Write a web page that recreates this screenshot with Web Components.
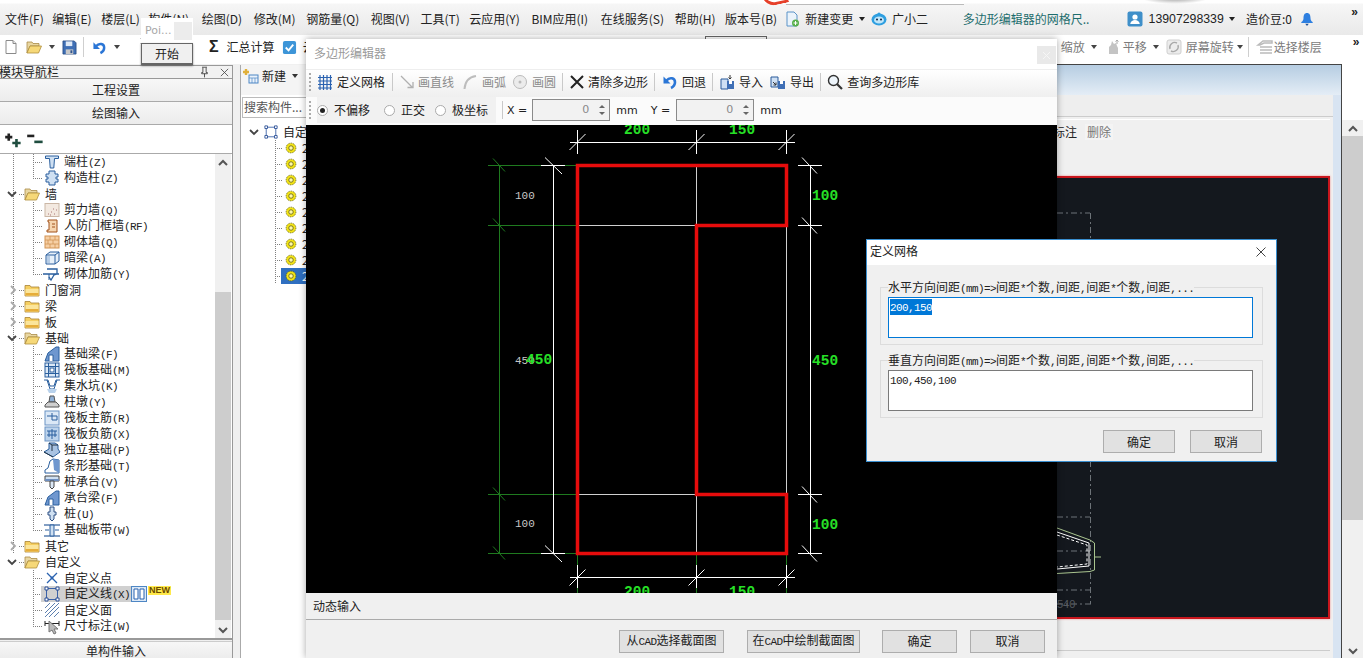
<!DOCTYPE html>
<html lang="zh">
<head>
<meta charset="utf-8">
<title>多边形编辑器</title>
<style>
  html, body { margin: 0; padding: 0; background: #f0f0f0; overflow: hidden; }
  body { font: 12px/16px "Noto Sans CJK SC", "Liberation Sans", sans-serif; color: #222; }
</style>
</head>
<body>
<gl-app>
  <gl-menubar></gl-menubar>
  <gl-toolbar></gl-toolbar>
  <gl-work></gl-work>
  <gl-poly-editor></gl-poly-editor>
  <gl-grid-dialog></gl-grid-dialog>
  <gl-start-popup></gl-start-popup>
</gl-app>

<script>
(function () {
  'use strict';

  var BLUE = '#2a5f9e', PALE = '#cfe0f2';

  // 16x16 icon shapes, all hand drawn from the reference
  var ICONS = {
    page: '<path d="M3 1.5h7l3 3v10H3z" fill="#fff" stroke="#8a8a8a"/><path d="M10 1.5v3h3" fill="#e8e8e8" stroke="#8a8a8a"/>',
    folderOpen: '<path d="M1 3h5l1 1.5h6V7H4L1 14z" fill="#e9d7a2" stroke="#a98c46" stroke-width=".8"/><path d="M1 14l3-7h11.5L12.5 14z" fill="#f6d878" stroke="#b08f3e" stroke-width=".8"/>',
    folder: '<path d="M1 3.5h5l1 1.5h8v9H1z" fill="#f5cf62" stroke="#a98435" stroke-width=".8"/><path d="M1.5 7h13v6.5h-13z" fill="#fbe59b"/><path d="M1.5 11h13v2.5h-13z" fill="#e6ad3a"/>',
    floppy: '<path d="M1 1h12l2 2v12H1z" fill="#3f6fb5" stroke="#24477f" stroke-width=".8"/><path d="M4 1.5h7v5H4z" fill="#dfe9f6"/><path d="M4 10h8v5H4z" fill="#c9c9c9"/><path d="M9 11h2v3H9z" fill="#33568f"/>',
    undo: '<path d="M4.5 6.5c3-3.6 8.5-2.8 8.5 1.8 0 2.7-1.8 4.6-4 5.7" stroke="#2b76d6" stroke-width="2.6" fill="none"/><path d="M1.5 2.5v7h7z" fill="#2b76d6"/>',
    check: '<rect x="1" y="1" width="14" height="14" rx="2" fill="#3d95d8"/><path d="M4 8l3 3 5-6" stroke="#fff" stroke-width="2" fill="none"/>',
    docAdd: '<path d="M3 1h7l3 3v11H3z" fill="#eaf3fb" stroke="#5b93c8"/><circle cx="11.5" cy="12" r="3.5" fill="#58b04a"/><path d="M9.5 12h4M11.5 10v4" stroke="#fff"/>',
    robot: '<ellipse cx="8" cy="8.5" rx="7.5" ry="6" fill="#2f9fe0"/><circle cx="8" cy="3" r="1.6" fill="#2f9fe0"/><ellipse cx="8" cy="9" rx="5" ry="3.6" fill="#bfe6fa"/><circle cx="6" cy="8.5" r="1" fill="#124"/><circle cx="10" cy="8.5" r="1" fill="#124"/>',
    user: '<rect x=".5" y=".5" width="15" height="15" rx="2" fill="#3f8fc9"/><circle cx="8" cy="6" r="2.6" fill="#fff"/><path d="M3.2 13c.6-3 2.6-4 4.8-4s4.2 1 4.8 4z" fill="#fff"/>',
    bell: '<path d="M8 1c3 0 4 2.500 4 6 0 2 1 3.500 2.500 4.500v1h-13v-1C3 10.500 4 9 4 7c0-3.500 1-6 4-6z" fill="#2e7fe0"/><path d="M6 13.500h4L8 16z" fill="#1d4f96"/>',
    pan: '<path d="M3 15V8l2-2 1-4 2 3 2-1 1 3 1 2v6z" fill="#c4c4c4"/><path d="M11 1v4M9.500 2.500L11 1l1.500 1.500" stroke="#aaa" fill="none"/>',
    rotate: '<rect x="1" y="1" width="14" height="14" rx="2" fill="#ececec" stroke="#cfcfcf"/><path d="M4 10a5 5 0 0 1 7-6M12 6a5 5 0 0 1-7 6" stroke="#a9a9a9" stroke-width="1.400" fill="none"/>',
    floors: '<path d="M1 6l5-4h9v2H7L3 6zM3 8h12M3 11h12M3 14h12" stroke="#bbb" stroke-width="1.500" fill="none"/>',
    pin: '<path d="M5 1.500h6M6 2v6H4.500v1.500h7V8H10V2M8 9.500V14" stroke="#333" fill="none"/>',
    close: '<path d="M3.500 3.500l9 9M12.500 3.500l-9 9" stroke="#444" fill="none"/>',
    expand: '<path d="M1 6h6M4 3v6" stroke="#222" stroke-width="2.200"/><path d="M7 11h7M10.500 7.500v7" stroke="#1f4d3f" stroke-width="2.200"/>',
    collapse: '<path d="M1 5h6" stroke="#222" stroke-width="2.200"/><path d="M7 10h7" stroke="#1f4d3f" stroke-width="2.200"/>',
    newItem: '<path d="M3 1v6M0 4h6" stroke="#e0b03a" stroke-width="2.400"/><rect x="6" y="7" width="9" height="8" fill="#eaf2fb" stroke="#4d86c4"/><path d="M6 10h9M9 10v5M12 10v5" stroke="#4d86c4" stroke-width=".7"/>',
    gear: '<circle cx="8" cy="8" r="6.500" fill="#f4e416" stroke="#55550e" stroke-dasharray="1.500 1"/><circle cx="8" cy="8" r="3" fill="#fff9a8" stroke="#55550e"/>',
    shape: '<rect x="2.500" y="2.500" width="11" height="11" fill="none" stroke="#3b62a8"/><path d="M1 1h3v3H1zM12 1h3v3h-3zM1 12h3v3H1zM12 12h3v3h-3z" fill="#fff" stroke="#2a4f96"/>',
    grid: '<path d="M1 3.500h14M1 7h14M1 10.500h14M1 14h14M3 1v15M6.500 1v15M10 1v15M13.500 1v15" stroke="#2a62b0" stroke-width="1.200" fill="none"/>',
    drawLine: '<path d="M2 2l11 11M8.500 13.500H14V8" stroke="#b0b0b0" stroke-width="1.300" fill="none"/>',
    arc: '<path d="M2.500 15C3 8 7 3 14 2" stroke="#bdbdbd" stroke-width="2" fill="none"/>',
    circle: '<circle cx="8" cy="8" r="6.500" fill="#ececec" stroke="#bbb"/><circle cx="8" cy="8" r="1.500" fill="#bbb"/>',
    bigX: '<path d="M2 2l12 12M14 2L2 14" stroke="#222" stroke-width="2" fill="none"/>',
    importFile: '<path d="M2 5h7v10H2z" fill="#cfe0f4" stroke="#2a5a9a"/><path d="M8 7h7v8H8z" fill="#3f6fb5"/><path d="M10 7h3v3h-3z" fill="#fff"/><path d="M11 1v4M9.500 3.500L11 5l1.500-1.500" stroke="#333" fill="none"/>',
    exportFile: '<path d="M1 3h7v10H1z" fill="#cfe0f4" stroke="#2a5a9a"/><path d="M8 7h7v8H8z" fill="#3f6fb5"/><path d="M10 7h3v3h-3z" fill="#fff"/><path d="M3 8l3 3M6 8.500V11H3.500" stroke="#333" fill="none"/>',
    search: '<circle cx="6.500" cy="6.500" r="5" fill="#eef5fb" stroke="#333" stroke-width="1.400"/><path d="M10 10l5 5" stroke="#333" stroke-width="2.200"/>',
    column: '<path d="M1.500 2h13v2.500h-4L9.800 14H6.200L5.500 4.500h-4z" fill="' + PALE + '" stroke="' + BLUE + '"/>',
    tie: '<path d="M5 1h6v3h3v3h-2v2h2v3h-3v3H5v-3H2V9h2V7H2V4h3z" fill="' + PALE + '" stroke="' + BLUE + '"/>',
    shear: '<rect x="1" y="1.500" width="14" height="13" fill="#f3e9e0" stroke="#cbb7a6"/><path d="M4 12h1M7 10h1M10 12h1M12 8h1M9 7h1M6 13h1" stroke="#a77"/>',
    frameWall: '<path d="M4 2h9v12H3v-2h2V4H4z" fill="#f6d6b0" stroke="#a2521d"/><path d="M8 6h3M8 9h3" stroke="#a2521d"/>',
    brick: '<rect x="1" y="2" width="14" height="12" fill="#f6cfa4" stroke="#d29455"/><path d="M1 6h14M1 10h14M6 2v4M11 2v4M4 6v4M9 6v4M6 10v4M11 10v4" stroke="#d29455" stroke-width=".8"/>',
    hidBeam: '<path d="M2 5l4-3h9v9l-4 3H2z" fill="#e7f0f9" stroke="' + BLUE + '"/><path d="M2 5h9v9M11 5l4-3" fill="none" stroke="' + BLUE + '"/><path d="M3 6h3v7H3z" fill="#b7cde6"/>',
    wallRebar: '<path d="M-1 8h16M3 3h10v5l-3 1-3 5-2-3" fill="none" stroke="' + BLUE + '" stroke-width="1.300"/><path d="M5 14V8" stroke="' + BLUE + '"/>',
    slope: '<path d="M1 15l3-8 8-6h3v14z" fill="#6f97cf" stroke="' + BLUE + '"/><path d="M5 15V9h4v6" fill="#fff" stroke="' + BLUE + '"/>',
    raft: '<rect x="1" y="1" width="14" height="14" fill="#dbe8f6" stroke="' + BLUE + '"/><path d="M1 4.500h14M1 11.500h14M4.500 1v14M11.500 1v14" stroke="' + BLUE + '"/><rect x="6" y="6" width="4" height="4" fill="#fff" stroke="' + BLUE + '"/>',
    sump: '<path d="M0 2h4l2 6h4l2-6h4M3 2l3 9h4l3-9" fill="none" stroke="' + BLUE + '"/><path d="M3 11l2 4h6l2-4z" fill="#b9d2ec"/>',
    pier: '<path d="M6 2h4l1 6H5z" fill="#8fb0d6" stroke="#555"/><path d="M1 11l3-3h8l3 3v2H1z" fill="#cfcfcf" stroke="#555"/>',
    mainBar: '<rect x="1" y="1" width="14" height="14" fill="#dbe8f6" stroke="#6b93c4"/><path d="M3 6h10v4H8V3" fill="none" stroke="' + BLUE + '"/>',
    negBar: '<rect x="1" y="1" width="14" height="14" fill="#bcd3ec" stroke="#6b93c4"/><path d="M3 5h10M3 9h10M8 3v10M5 5v6M11 5v6" fill="none" stroke="' + BLUE + '"/>',
    isoFound: '<path d="M0 10l5-3V1h6l3 2v4l2 3-7 5z" fill="#a9c3e2" stroke="' + BLUE + '"/><path d="M5 1l3 2v6M8 3h6M0 10l9 5" fill="none" stroke="#234"/>',
    strip: '<path d="M1 15v-3l3-2 2-7 3-2 6 1v13z" fill="#fff" stroke="' + BLUE + '"/><path d="M9 1l1 11 5 3V2z" fill="#6f97cf"/>',
    capPile: '<path d="M1 2h14v5H1z" fill="' + PALE + '" stroke="#444"/><path d="M1 5h14v2H1z" fill="#6f8fbf"/><path d="M6 7h4v6l-2 2-2-2z" fill="#dbe8f6" stroke="#444"/>',
    pile: '<path d="M6 1h4v5h2v3h-2v4l-2 2-2-2V9H4V6h2z" fill="' + PALE + '" stroke="#2c4f83"/>',
    slabBand: '<path d="M0 3h16M0 14h16" stroke="#5a7fb0" stroke-width="1.600"/><path d="M6 3h4v11H6z" fill="' + PALE + '" stroke="' + BLUE + '"/><path d="M1 8h4M11 8h4" stroke="' + BLUE + '"/>',
    point: '<path d="M3 3l10 10M13 3L3 13" stroke="#2a62b0" stroke-width="1.300"/><circle cx="8" cy="8" r="1.400" fill="#2a62b0"/>',
    hatch: '<path d="M1 6l5-5M1 11L11 1M1 15L15 1M5 15L15 5M10 15l5-5" stroke="#5c7fae"/>',
    dimMark: '<path d="M1 3v5M15 3v5M1 5.500h14" stroke="#222"/>',
    cols: '<rect x=".5" y=".5" width="15" height="15" fill="#dbe8f6" stroke="#4d86c4"/><path d="M3 3h4v10H3zM9 3h4v10H9z" fill="#fff" stroke="#2a62b0"/>'
  };

  // half width Latin beside 12px CJK, the way the old dialog font sets it
  function mono(s) {
    return s.replace(/[^\u4e00-\u9fff]+/g, function (m) {
      return '<span class="k">' + m.replace(/&/g, '&amp;').replace(/</g, '&lt;').replace(/>/g, '&gt;') + '</span>';
    });
  }
  var MONO_CSS = '.k{font:11px/16px "Liberation Mono",monospace;letter-spacing:-.6px;}';

  class GlIcon extends HTMLElement {
    connectedCallback() {
      var size = this.getAttribute('size') || 16;
      var root = this.attachShadow({ mode: 'open' });
      root.innerHTML = '<style>:host{display:inline-flex;flex:none;}svg{display:block;overflow:visible;}</style>' +
        '<svg width="' + size + '" height="' + size + '" viewBox="0 0 16 16">' + (ICONS[this.getAttribute('name')] || '') + '</svg>';
    }
  }

  class GlApp extends HTMLElement {
    connectedCallback() {
      this.attachShadow({ mode: 'open' }).innerHTML =
        '<style>:host{display:flex;flex-direction:column;position:relative;width:1363px;height:658px;overflow:hidden;background:#f0f0f0;}</style><slot></slot>';
    }
  }

  class GlMenubar extends HTMLElement {
    connectedCallback() {
      var left = ['文件(F)', '编辑(E)', '楼层(L)', '构件(N)', '绘图(D)', '修改(M)', '钢筋量(Q)', '视图(V)', '工具(T)', '云应用(Y)', 'BIM应用(I)', '在线服务(S)', '帮助(H)', '版本号(B)'];
      var nudge = [0, -2, -1, -2, 2, 1, 0, 1, 0, -1, 1, 2, 0, -1]; // the reference font sets these a little unevenly
      this.attachShadow({ mode: 'open' }).innerHTML =
        '<style>' +
        ':host{display:flex;align-items:center;flex:none;height:35px;padding:3px 0 0 5px;box-sizing:border-box;position:relative;gap:10.6px;' +
        'background:linear-gradient(#fff 0,#fff 3px,#f6f6f6 4px,#e9e9e9 100%);white-space:nowrap;line-height:16px;}' +
        '.arrow{width:0;height:0;border:3px solid transparent;border-top:4px solid #222;border-bottom:0;}' +
        '.scrap{position:absolute;left:786px;top:0;width:178px;height:5px;background:#fff;border-bottom:1px solid #bbb;box-sizing:border-box;}' +
        '.red{position:absolute;left:763px;top:-8px;width:22px;height:10px;border:3px solid #e6402a;border-top:0;border-right:0;border-radius:0 0 0 12px;transform:rotate(-12deg);}' +
        '.smudge{position:absolute;left:1140px;top:-10px;width:70px;height:14px;background:radial-gradient(closest-side,rgba(0,0,0,.45),transparent);}' +
        '.teal{color:#1d6d6d;}' +
        '.more{font:bold 12px/12px "Liberation Sans",sans-serif;color:#222;margin-top:-14px;}' +
        '</style>' +
        left.map(function (t, i) { return '<span style="margin-left:' + nudge[i] + 'px">' + t + '</span>'; }).join('') +
        '<gl-icon name="docAdd" style="margin-left:-4px"></gl-icon><span style="margin-left:-5px">新建变更</span><span class="arrow" style="margin-left:-5px"></span>' +
        '<gl-icon name="robot" style="margin-left:-4px"></gl-icon><span style="margin-left:-6px">广小二</span>' +
        '<span class="teal" style="margin-left:24px">多边形编辑器的网格尺..</span>' +
        '<gl-icon name="user" style="margin-left:27px"></gl-icon><span style="margin-left:-5px;font-family:\'Liberation Sans\',sans-serif;font-size:12.3px;">13907298339</span><span class="arrow" style="margin-left:-5px"></span>' +
        '<span style="margin-left:0">造价豆:0</span><gl-icon name="bell" size="14" style="margin-left:-3px"></gl-icon>' +
        '<span class="more" style="margin-left:27px">»</span>' +
        '<span class="scrap"></span><span class="red"></span><span class="smudge"></span>';
    }
  }

  class GlToolbar extends HTMLElement {
    connectedCallback() {
      this.attachShadow({ mode: 'open' }).innerHTML =
        '<style>' +
        ':host{display:flex;align-items:center;flex:none;height:29px;box-sizing:border-box;padding-bottom:5px;background:#fff;white-space:nowrap;line-height:16px;padding-left:3px;}' +
        '.arrow{width:0;height:0;border:3px solid transparent;border-top:4px solid #444;border-bottom:0;margin:0 6px;}' +
        '.sep{width:1px;height:20px;background:#cfcfcf;}' +
        '.sigma{font:bold 16px/16px "Liberation Sans",sans-serif;}' +
        '.tab{align-self:flex-start;margin-top:1px;width:62px;height:28px;box-sizing:border-box;border:1px solid #666;border-bottom:0;}' +
        '.dim{color:#7b7b7b;}' +
        '.more{font:bold 12px/12px "Liberation Sans",sans-serif;color:#222;margin-left:31px;margin-top:-10px;}' +
        '</style>' +
        '<gl-icon name="page"></gl-icon><gl-icon name="folderOpen" style="margin-left:7px"></gl-icon><span class="arrow" style="margin:0 0 0 7px"></span>' +
        '<gl-icon name="floppy" size="15" style="margin-left:7px"></gl-icon><span class="sep" style="margin:0 8px 0 6px"></span>' +
        '<gl-icon name="undo" size="15"></gl-icon><span class="arrow" style="margin:0 0 0 7px"></span>' +
        '<svg width="5" height="8" style="margin:-12px 3px 0 20px;flex:none"><path d="M1 1l3 3-3 3" fill="none" stroke="#222" stroke-width="1.400"/></svg>' +
        '<span class="sigma" style="margin-left:61px">Σ</span><span style="margin-left:8px">汇总计算</span>' +
        '<gl-icon name="check" size="15" style="margin-left:7px"></gl-icon><span style="margin-left:6px">云</span>' +
        '<span class="tab" style="margin-left:390px"></span>' +
        '<span class="dim" style="margin-left:294px">缩放</span><span class="arrow" style="margin:0 0 0 6px"></span>' +
        '<gl-icon name="pan" style="margin-left:9px"></gl-icon><span class="dim" style="margin-left:1px">平移</span><span class="arrow" style="margin:0 0 0 6px"></span>' +
        '<gl-icon name="rotate" style="margin-left:7px"></gl-icon><span class="dim" style="margin-left:4px">屏幕旋转</span><span class="arrow" style="margin:0 0 0 3px"></span>' +
        '<span class="sep" style="margin:0 8px 0 5px"></span><gl-icon name="floors"></gl-icon><span class="dim" style="margin-left:1px">选择楼层</span>' +
        '<span class="more">»</span>';
    }
  }

  class GlScroll extends HTMLElement {
    connectedCallback() {
      var before = this.getAttribute('before') || 0;
      var thumb = this.getAttribute('thumb') || 100;
      this.attachShadow({ mode: 'open' }).innerHTML =
        '<style>' +
        ':host{display:flex;flex-direction:column;flex:none;width:16px;background:#f0f0f0;}' +
        '.btn{display:flex;align-items:center;justify-content:center;height:16px;flex:none;}' +
        '.thumb{background:#cdcdcd;flex:none;}.fill{flex:1;display:flex;flex-direction:column;}' +
        '</style>' +
        '<div class="btn"><svg width="10" height="7"><path d="M1 6l4-4 4 4" fill="none" stroke="#555" stroke-width="2"/></svg></div>' +
        '<div class="fill"><div style="height:' + before + 'px"></div><div class="thumb" style="height:' + thumb + 'px"></div></div>' +
        '<div class="btn bottom"><svg width="10" height="7"><path d="M1 1l4 4 4-4" fill="none" stroke="#555" stroke-width="2"/></svg></div>';
    }
  }

  var DOT = '#808080';
  function vDots(x, h) { return 'repeating-linear-gradient(' + DOT + ' 0 1px,transparent 1px 2px) ' + x + 'px 0/1px ' + h + ' no-repeat'; }
  function hDots(x, w) { return 'repeating-linear-gradient(90deg,' + DOT + ' 0 1px,transparent 1px 2px) ' + x + 'px 8px/' + w + 'px 1px no-repeat'; }

  // one row of a tree: folder rows carry a chevron, leaf rows hang off the dotted branch
  class GlTreeRow extends HTMLElement {
    connectedCallback() {
      var folder = this.hasAttribute('folder'), open = this.hasAttribute('open');
      var last = this.hasAttribute('last'), loose = this.hasAttribute('loose');
      var bg = [];
      if (!loose) bg.push(vDots(13, '100%'));
      if (!folder) { bg.push(vDots(33, last ? '9px' : '100%')); bg.push(hDots(33, 10)); }
      else bg.push(hDots(19, 5));
      var chev = !folder ? '' : open
        ? '<svg class="chev" width="10" height="7" style="margin-left:7px"><path d="M1 1l4 4 4-4" fill="none" stroke="#444" stroke-width="1.800"/></svg>'
        : '<svg class="chev" width="7" height="10" style="margin-left:10px"><path d="M1 1l4 4-4 4" fill="none" stroke="#aaa" stroke-width="1.800"/></svg>';
      var icon = folder ? (open ? 'folderOpen' : 'folder') : this.getAttribute('icon');
      this.attachShadow({ mode: 'open' }).innerHTML =
        '<style>' + MONO_CSS +
        ':host{display:flex;align-items:center;height:16px;white-space:nowrap;background:' + bg.join(',') + ';}' +
        '.body{display:flex;align-items:center;gap:' + (folder ? 5 : 4) + 'px;height:16px;padding-right:1px;}' +
        '.leaf{margin-left:41px;padding-left:3px;}' +
        '.sel{background:#d0d0d0;}' +
        '.chev{flex:none;}' +
        '</style>' + chev +
        '<div class="body ' + (folder ? '' : 'leaf ') + (this.hasAttribute('sel') ? 'sel' : '') + '"' +
        (folder ? ' style="margin-left:7px"' : '') + '>' +
        '<gl-icon name="' + icon + '"></gl-icon><span>' + mono(this.getAttribute('label')) + '</span></div><slot></slot>';
    }
  }

  var NAV_TREE = [
    ['column', '端柱(Z)'], ['tie', '构造柱(Z)', 'last'],
    ['open', '墙'],
    ['shear', '剪力墙(Q)'], ['frameWall', '人防门框墙(RF)'], ['brick', '砌体墙(Q)'], ['hidBeam', '暗梁(A)'], ['wallRebar', '砌体加筋(Y)', 'last'],
    ['closed', '门窗洞'], ['closed', '梁'], ['closed', '板'],
    ['open', '基础'],
    ['slope', '基础梁(F)'], ['raft', '筏板基础(M)'], ['sump', '集水坑(K)'], ['pier', '柱墩(Y)'], ['mainBar', '筏板主筋(R)'], ['negBar', '筏板负筋(X)'],
    ['isoFound', '独立基础(P)'], ['strip', '条形基础(T)'], ['capPile', '桩承台(V)'], ['slope', '承台梁(F)'], ['pile', '桩(U)'], ['slabBand', '基础板带(W)', 'last'],
    ['closed', '其它'],
    ['open', '自定义', 'loose'],
    ['point', '自定义点', 'loose'], ['shape', '自定义线(X)', 'loose sel'], ['hatch', '自定义面', 'loose'], ['dimMark', '尺寸标注(W)', 'loose last']
  ];

  class GlNav extends HTMLElement {
    connectedCallback() {
      var rows = NAV_TREE.map(function (r) {
        var flags = r[2] || '';
        var extra = flags.indexOf('sel') >= 0
          ? '<gl-icon name="cols"></gl-icon><span class="new">NEW</span>' : '';
        if (r[0] === 'open') return '<gl-tree-row folder open label="' + r[1] + '" ' + flags + '></gl-tree-row>';
        if (r[0] === 'closed') return '<gl-tree-row folder label="' + r[1] + '" ' + flags + '></gl-tree-row>';
        return '<gl-tree-row icon="' + r[0] + '" label="' + r[1] + '" ' + flags + '>' + extra + '</gl-tree-row>';
      }).join('');
      this.attachShadow({ mode: 'open' }).innerHTML =
        '<style>' +
        ':host{display:flex;flex-direction:column;flex:none;width:233px;height:594px;margin-top:1px;box-sizing:border-box;border-right:1px solid #999;}' +
        '.head{display:flex;align-items:center;height:12px;flex:none;border:1px solid #999;border-left:0;border-right:0;background:#f2f2f2;line-height:12px;box-sizing:content-box;}' +
        '.head span{flex:1;margin-left:-1px;}' +
        '.stack{display:flex;align-items:center;justify-content:center;height:23px;flex:none;box-sizing:border-box;border-bottom:1px solid #aaa;background:linear-gradient(#f7f7f7,#ececec);}' +
        '.tools{display:flex;align-items:center;gap:3px;height:29px;flex:none;padding-left:4px;background:#fff;border-bottom:1px solid #aaa;box-sizing:border-box;}' +
        '.tree{display:flex;flex:none;height:484px;background:#fff;border-bottom:2px solid #999;overflow:hidden;position:relative;}' +
        '.rows{flex:1;overflow:hidden;}' +
        '.cursor{position:absolute;left:48px;top:466px;}' +
        '.foot{display:flex;align-items:center;justify-content:center;flex:1;background:linear-gradient(#f7f7f7,#ececec);margin-top:1px;border-top:1px solid #ccc;}' +
        '.new{font:bold 9px/9px "Liberation Sans",sans-serif;color:#6b4a00;background:#ffe94a;padding:0 1px;margin-left:1px;transform:translateY(-4px);}' +
        'gl-scroll{width:16px;margin-right:1px;}' +
        '</style>' +
        '<div class="head"><span>模块导航栏</span><gl-icon name="pin" size="13"></gl-icon><gl-icon name="close" size="13" style="margin:0 1px 0 7px"></gl-icon></div>' +
        '<div class="stack">工程设置</div><div class="stack">绘图输入</div>' +
        '<div class="tools"><gl-icon name="expand" size="19"></gl-icon><gl-icon name="collapse" size="19"></gl-icon></div>' +
        '<div class="tree"><div class="rows">' + rows + '</div><gl-scroll before="122" thumb="328"></gl-scroll>' +
        '<svg class="cursor" width="13" height="15"><path d="M1 1v11l3-2 2 4 2-1-2-4h4z" fill="#bbb" stroke="#777"/></svg></div>' +
        '<div class="foot">单构件输入</div>';
    }
  }

  class GlList extends HTMLElement {
    connectedCallback() {
      var rows = '';
      for (var i = 0; i < 9; i++) {
        rows += '<div class="row' + (i === 8 ? ' sel' : '') + '"><gl-icon name="gear" size="12"></gl-icon><span>2</span></div>';
      }
      this.attachShadow({ mode: 'open' }).innerHTML =
        '<style>' +
        ':host{display:flex;flex-direction:column;flex:none;width:130px;margin:1px 0 0 7px;background:#fff;border-left:1px solid #aaa;height:594px;box-sizing:border-box;}' +
        '.bar{display:flex;align-items:center;height:30px;box-sizing:border-box;padding:0 0 8px 2px;gap:3px;background:#f4f4f4;flex:none;}' +
        '.find{height:21px;margin:2px 0 0 1px;border:1px solid #bbb;box-sizing:border-box;padding-left:1px;line-height:18px;color:#555;background:#fff;white-space:nowrap;flex:none;}' +
        '.top{display:flex;align-items:center;height:16px;margin-top:6px;padding-left:8px;gap:5px;white-space:nowrap;flex:none;}' +
        '.rows{background:' + vDots(34, '100%') + ';}' +
        '.row{display:flex;align-items:center;height:16px;padding-left:44px;gap:5px;background:' + hDots(34, 8) + ';}' +
        '.sel{background:linear-gradient(#2f6fc0,#2f6fc0) 40px 0/90px 100% no-repeat,' + hDots(34, 6) + ';color:#fff;}' +
        '.arrow{width:0;height:0;border:3px solid transparent;border-top:4px solid #333;border-bottom:0;margin-left:3px;}' +
        '</style>' +
        '<div class="bar"><gl-icon name="newItem"></gl-icon><span>新建</span><span class="arrow"></span></div>' +
        '<div class="find">搜索构件...</div>' +
        '<div class="top"><svg width="10" height="7"><path d="M1 1l4 4 4-4" fill="none" stroke="#444" stroke-width="1.800"/></svg>' +
        '<gl-icon name="shape" size="14"></gl-icon><span>自定</span></div>' +
        '<div class="rows">' + rows + '</div>';
    }
  }

  // the main window that sits behind the editor; only its right part shows
  class GlBackView extends HTMLElement {
    connectedCallback() {
      var d = 'stroke="#6d7378" stroke-dasharray="6 3 2 3" fill="none"';
      this.attachShadow({ mode: 'open' }).innerHTML =
        '<style>' +
        ':host{display:flex;flex:1;min-width:0;height:595px;}' +
        '.frame{flex:1;box-sizing:border-box;border:1px solid #444;border-bottom:0;display:flex;flex-direction:column;background:#d8e4f2;padding:0 8px 0 0;}' +
        '.cap{height:30px;flex:none;margin-right:-8px;background:linear-gradient(#b6cde2,#e4edf6);}' +
        '.strip{height:21px;flex:none;background:#eeeeee;}' +
        '.inner{flex:1;display:flex;flex-direction:column;background:#f0f0f0;border-top:1px solid #ccc;padding:2px 3px 0 0;box-sizing:border-box;}' +
        '.acts{display:flex;align-items:center;justify-content:flex-end;height:57px;flex:none;padding-right:217px;gap:8px;padding-bottom:33px;box-sizing:border-box;background:#f0f0f0;border-top:1px solid #fff;}' +
        '.acts .off{color:#777;background:#f4f4f4;padding:0 2px;}' +
        '.canvas{height:443px;flex:none;box-sizing:border-box;border:2px solid #c9161d;background:#14181e;display:flex;justify-content:flex-end;box-shadow:0 0 2px #e88;}' +
        '.tail{flex:1;border-bottom:1px solid #ccc;margin-bottom:8px;}' +
        'svg{display:block;}' +
        '.sb{display:flex;flex-direction:column;flex:none;width:21px;background:#fff;}' +
        'gl-scroll{width:21px;flex:1;margin-top:56px;}' +
        'text{font:11px "Liberation Sans",sans-serif;fill:#555a60;}' +
        '</style>' +
        '<div class="frame"><div class="cap"></div><div class="strip"></div><div class="inner">' +
        '<div class="acts"><span>标注</span><span class="off">删除</span></div>' +
        '<div class="canvas"><svg width="271" height="439" viewBox="1057 178 271 439">' +
        '<path d="M1057 213h33M1090.500 213v26M1090.500 461v143M1057 517h33M1057 551h33M1057 590h33M1057 604h35" ' + d + '/>' +
        '<path d="M1057 528l33 12 4.500 3v27l-4.500 1.500-33 2M1095 557h6" stroke="#a9c48f" fill="none"/>' +
        '<path d="M1057 532l32 11v23l-32 3" stroke="#fff" fill="none"/>' +
        '<path d="M1057 535l30 10v19l-30 3" stroke="#fff" stroke-dasharray="3 2" fill="none"/>' +
        '<text x="1057" y="608">540</text></svg></div>' +
        '<div class="tail"></div></div></div>' +
        '<div class="sb"><gl-scroll before="0" thumb="384"></gl-scroll></div>';
    }
  }

  class GlWork extends HTMLElement {
    connectedCallback() {
      this.attachShadow({ mode: 'open' }).innerHTML =
        '<style>:host{display:flex;flex:1;min-height:0;align-items:flex-start;}</style>' +
        '<gl-nav></gl-nav><gl-list></gl-list><gl-back-view></gl-back-view>';
    }
  }

  class GlToolBtn extends HTMLElement {
    connectedCallback() {
      var off = this.hasAttribute('off');
      this.attachShadow({ mode: 'open' }).innerHTML =
        '<style>:host{display:inline-flex;align-items:center;gap:' + (this.getAttribute('gap') || 4) + 'px;white-space:nowrap;' + (off ? 'color:#8b8b8b;' : '') + '}</style>' +
        '<gl-icon name="' + this.getAttribute('icon') + '"></gl-icon><slot></slot>';
    }
  }

  class GlSpin extends HTMLElement {
    connectedCallback() {
      this.attachShadow({ mode: 'open' }).innerHTML =
        '<style>' +
        ':host{display:flex;align-items:center;width:78px;height:22px;box-sizing:border-box;border:1px solid #8a8a8a;background:#f2f2f2;flex:none;}' +
        '.v{flex:1;text-align:right;color:#8a8a8a;font:11px/20px "DejaVu Sans",sans-serif;padding-right:6px;}' +
        '.s{display:flex;flex-direction:column;gap:4px;width:14px;align-items:center;}' +
        'i{width:0;height:0;border:3px solid transparent;}' +
        '.u{border-bottom:3px solid #666;border-top:0;}.d{border-top:3px solid #666;border-bottom:0;}' +
        '</style><div class="v"><slot></slot></div><div class="s"><i class="u"></i><i class="d"></i></div>';
    }
  }

  class GlRadio extends HTMLElement {
    connectedCallback() {
      this.attachShadow({ mode: 'open' }).innerHTML =
        '<style>:host{display:inline-flex;align-items:center;gap:6px;white-space:nowrap;}' +
        '.r{width:9px;height:9px;border-radius:50%;border:1px solid #aaa;background:#fff;display:flex;align-items:center;justify-content:center;}' +
        '.r b{width:5px;height:5px;border-radius:50%;background:#222;}</style>' +
        '<span class="r">' + (this.hasAttribute('on') ? '<b></b>' : '') + '</span><slot></slot>';
    }
  }

  class GlButton extends HTMLElement {
    connectedCallback() {
      this.attachShadow({ mode: 'open' }).innerHTML =
        '<style>' + MONO_CSS +
        ':host{display:flex;align-items:center;justify-content:center;height:23px;box-sizing:border-box;border:1px solid #adadad;background:#e1e1e1;flex:none;white-space:nowrap;}' +
        '</style><span>' + mono(this.getAttribute('label')) + '</span>';
    }
  }

  function seg(x1, y1, x2, y2, c) {
    return '<line x1="' + x1 + '" y1="' + y1 + '" x2="' + x2 + '" y2="' + y2 + '" stroke="' + c + '"/>';
  }

  class GlPolyEditor extends HTMLElement {
    connectedCallback() {
      var W = '#fff', G = '#cfcfcf', D = '#1f7a1f', art = '', i;
      var xs = [577.5, 696.5, 786.5], ys = [165.5, 225.5, 494.5, 553.5];

      // top and bottom dimension chains
      art += seg(570, 142.5, 795, 142.5, W) + seg(570, 577.5, 795, 577.5, W);
      for (i = 0; i < 3; i++) {
        art += seg(xs[i], 130, xs[i], 154, W) + seg(xs[i] - 8, 150, xs[i] + 8, 134, W);
        art += seg(xs[i], 555, xs[i], 565, D) + seg(xs[i], 565, xs[i], 588, W) + seg(xs[i], 588, xs[i], 593, D);
        art += seg(xs[i] - 8, 585.500, xs[i] + 8, 569.500, W);
      }
      // right chain
      art += seg(810.5, 165, 810.5, 554, W);
      for (i = 0; i < 4; i++) art += seg(798, ys[i], 822, ys[i], W) + seg(802, ys[i] - 8, 817, ys[i] + 8, W);
      // left chains, green behind white
      art += seg(499.5, 165, 499.5, 554, D);
      for (i = 0; i < 4; i++) art += seg(488, ys[i], 577, ys[i], D) + seg(493, ys[i] - 7, 505, ys[i] + 6, D);
      art += seg(553.5, 165, 553.5, 554, W);
      art += seg(541, 165.5, 565, 165.5, W) + seg(541, 553.5, 565, 553.5, W);
      art += seg(545, 157.5, 562, 174, W) + seg(545, 545.5, 562, 562, W);
      // grid lines inside the profile
      art += seg(577, 225.5, 696, 225.5, G) + seg(577, 494.5, 696, 494.5, G);
      art += seg(696.5, 165, 696.5, 225, G) + seg(696.5, 494, 696.5, 553, G) + seg(786.5, 225, 786.5, 494, G);

      var poly = '<path d="M577.500 165.500H786.500V225.500H696.500V494.500H786.500V553.500H577.500Z" fill="none" stroke="#e60c0c" stroke-width="3.500"/>';
      var txt = [[624, 134, '200'], [729, 134, '150'], [624, 596, '200'], [729, 596, '150'], [812, 200, '100'], [812, 365, '450'], [812, 529, '100'], [526, 364, '450']]
        .map(function (t) { return '<text class="g" x="' + t[0] + '" y="' + t[1] + '">' + t[2] + '</text>'; }).join('');
      var gray = [[515, 199, '100'], [515, 364, '450'], [515, 527, '100']]
        .map(function (t) { return '<text class="w" x="' + t[0] + '" y="' + t[1] + '">' + t[2] + '</text>'; }).join('');

      this.attachShadow({ mode: 'open' }).innerHTML =
        '<style>' +
        ':host{position:absolute;left:306px;top:39px;width:751px;height:619px;display:flex;flex-direction:column;background:#f0f0f0;box-shadow:0 0 7px rgba(0,0,0,.35);z-index:2;}' +
        '.title{display:flex;align-items:center;justify-content:space-between;height:30px;flex:none;background:#fff;padding:0 1px 3px 8px;color:#9a9a9a;box-sizing:border-box;}' +
        '.x{display:flex;align-items:center;justify-content:center;width:19px;height:18px;background:#e9e9e9;margin-top:5px;}' +
        '.bar{display:flex;align-items:center;flex:none;white-space:nowrap;height:28px;box-sizing:border-box;padding-left:3px;}' +
        '.b1{background:linear-gradient(#fff,#efefef);border-top:1px solid #eee;padding-bottom:3px;}' +
        '.b2{background:#fbfbfb;padding-bottom:2px;}' +
        '.grip{width:2px;height:18px;margin-right:6px;background:repeating-linear-gradient(#aaa 0 2px,transparent 2px 4px);flex:none;}' +
        '.sep{width:1px;height:18px;background:#c9c9c9;flex:none;}' +
        '.radios{display:flex;align-items:center;height:26px;background:#f1f1f1;padding-right:8px;}' +
        '.lat{font:11px/16px "DejaVu Sans",sans-serif;margin-top:1px;}' +
        'svg.cad{display:block;flex:none;background:#000;}' +
        '.g{font:bold 14.5px "Liberation Mono",monospace;fill:#27e027;}' +
        '.w{font:11px "Liberation Mono",monospace;fill:#c8c8c8;}' +
        '.status{display:flex;align-items:center;height:25px;flex:none;padding:0 0 1px 7px;box-sizing:content-box;border-bottom:1px solid #aaa;}' +
        '.foot{display:flex;align-items:center;flex:1;padding:4px 0 0 313px;}' +
        '</style>' +
        '<div class="title"><span>多边形编辑器</span><span class="x"><svg width="9" height="9"><path d="M1 1l7 7M8 1L1 8" stroke="#f6f6f6"/></svg></span></div>' +
        '<div class="bar b1"><span class="grip"></span>' +
        '<gl-tool-btn icon="grid">定义网格</gl-tool-btn><span class="sep" style="margin:0 6px 0 7px"></span>' +
        '<gl-tool-btn icon="drawLine" off gap="3" style="margin-right:8px">画直线</gl-tool-btn>' +
        '<gl-tool-btn icon="arc" off style="margin-right:6px">画弧</gl-tool-btn>' +
        '<gl-tool-btn icon="circle" off>画圆</gl-tool-btn><span class="sep" style="margin:0 6px"></span>' +
        '<gl-tool-btn icon="bigX" gap="3">清除多边形</gl-tool-btn><span class="sep" style="margin:0 7px 0 6px"></span>' +
        '<gl-tool-btn icon="undo">回退</gl-tool-btn><span class="sep" style="margin:0 6px"></span>' +
        '<gl-tool-btn icon="importFile" style="margin-right:7px">导入</gl-tool-btn>' +
        '<gl-tool-btn icon="exportFile">导出</gl-tool-btn><span class="sep" style="margin:0 6px"></span>' +
        '<gl-tool-btn icon="search">查询多边形库</gl-tool-btn></div>' +
        '<div class="bar b2"><span class="grip"></span><div class="radios">' +
        '<gl-radio on>不偏移</gl-radio><gl-radio style="margin-left:14px">正交</gl-radio><gl-radio style="margin-left:10px">极坐标</gl-radio></div>' +
        '<span class="sep" style="margin:0 4px 0 6px"></span><span class="lat">X =</span>' +
        '<gl-spin style="margin-left:5px">0</gl-spin><span class="lat" style="margin-left:6px">mm</span>' +
        '<span class="lat" style="margin-left:13px">Y =</span><gl-spin style="margin-left:6px">0</gl-spin><span class="lat" style="margin-left:6px">mm</span></div>' +
        '<svg class="cad" width="751" height="468" viewBox="306 125 751 468">' + art + poly + gray + txt + '</svg>' +
        '<div class="status">动态输入</div>' +
        '<div class="foot">' +
        '<gl-button label="从CAD选择截面图" style="width:105px"></gl-button>' +
        '<gl-button label="在CAD中绘制截面图" style="width:113px;margin-left:23px"></gl-button>' +
        '<gl-button label="确定" style="width:75px;margin-left:22px"></gl-button>' +
        '<gl-button label="取消" style="width:75px;margin-left:13px"></gl-button></div>';
    }
  }

  class GlGridDialog extends HTMLElement {
    connectedCallback() {
      this.attachShadow({ mode: 'open' }).innerHTML =
        '<style>' + MONO_CSS +
        ':host{position:absolute;left:866px;top:239px;width:411px;height:223px;box-sizing:border-box;border:1px solid #3a8fd0;display:flex;flex-direction:column;background:#f0f0f0;z-index:3;}' +
        '.title{display:flex;align-items:center;justify-content:space-between;height:25px;flex:none;box-sizing:border-box;background:#fff;padding:0 7px 4px 3px;}' +
        '.body{flex:1;padding:15px 13px 0 13px;display:flex;flex-direction:column;}' +
        'fieldset{margin:0 0 8px 0;padding:3px 9px 0 7px;border:1px solid #dcdcdc;height:65px;box-sizing:border-box;min-width:0;}' +
        'legend{padding:0;margin:0;line-height:14px;white-space:nowrap;height:14px;}' +
        '.k{line-height:14px;}' +
        '.box{height:41px;box-sizing:border-box;border:1px solid #7a7a7a;background:#fff;padding:1px;line-height:14px;}' +
        '.box.on{border-color:#0078d7;}' +
        '.hl{background:#0078d7;color:#fff;display:inline-block;}' +
        '.acts{display:flex;justify-content:flex-end;gap:15px;padding:4px 1px 0 0;}' +
        '</style>' +
        '<div class="title"><span>定义网格</span><gl-icon name="close" size="16" style="margin-top:3px"></gl-icon></div>' +
        '<div class="body">' +
        '<fieldset><legend>' + mono('水平方向间距(mm)=>间距*个数,间距,间距*个数,间距,...') + '</legend>' +
        '<div class="box on"><span class="hl">' + mono('200,150') + '</span></div></fieldset>' +
        '<fieldset><legend>' + mono('垂直方向间距(mm)=>间距*个数,间距,间距*个数,间距,...') + '</legend>' +
        '<div class="box">' + mono('100,450,100') + '</div></fieldset>' +
        '<div class="acts"><gl-button label="确定" style="width:72px"></gl-button><gl-button label="取消" style="width:72px"></gl-button></div>' +
        '</div>';
    }
  }

  class GlStartPopup extends HTMLElement {
    connectedCallback() {
      this.attachShadow({ mode: 'open' }).innerHTML =
        '<style>' +
        ':host{position:absolute;left:141px;top:18px;width:52px;display:flex;flex-direction:column;z-index:4;}' +
        '.t{display:flex;align-items:center;justify-content:space-between;height:25px;background:#fff;color:#a8a8a8;padding-left:4px;font:11px/16px "DejaVu Sans",sans-serif;}' +
        '.x{width:18px;height:18px;background:#ececec;margin-right:1px;}' +
        '.b{display:flex;align-items:center;justify-content:center;height:22px;box-sizing:border-box;border:1px solid #666;border-bottom-width:2px;background:#f0f0f0;box-shadow:0 1px 2px rgba(0,0,0,.4);font:12px/16px "Noto Sans CJK SC",sans-serif;color:#222;}' +
        '</style><div class="t"><span>Poi...</span><span class="x"></span></div><div class="b">开始</div>';
    }
  }

  // children first, so their shadow roots exist when the parents connect
  customElements.define('gl-icon', GlIcon);
  customElements.define('gl-scroll', GlScroll);
  customElements.define('gl-tree-row', GlTreeRow);
  customElements.define('gl-tool-btn', GlToolBtn);
  customElements.define('gl-spin', GlSpin);
  customElements.define('gl-radio', GlRadio);
  customElements.define('gl-button', GlButton);
  customElements.define('gl-nav', GlNav);
  customElements.define('gl-list', GlList);
  customElements.define('gl-back-view', GlBackView);
  customElements.define('gl-work', GlWork);
  customElements.define('gl-menubar', GlMenubar);
  customElements.define('gl-toolbar', GlToolbar);
  customElements.define('gl-poly-editor', GlPolyEditor);
  customElements.define('gl-grid-dialog', GlGridDialog);
  customElements.define('gl-start-popup', GlStartPopup);
  customElements.define('gl-app', GlApp);
})();
</script>
</body>
</html>
